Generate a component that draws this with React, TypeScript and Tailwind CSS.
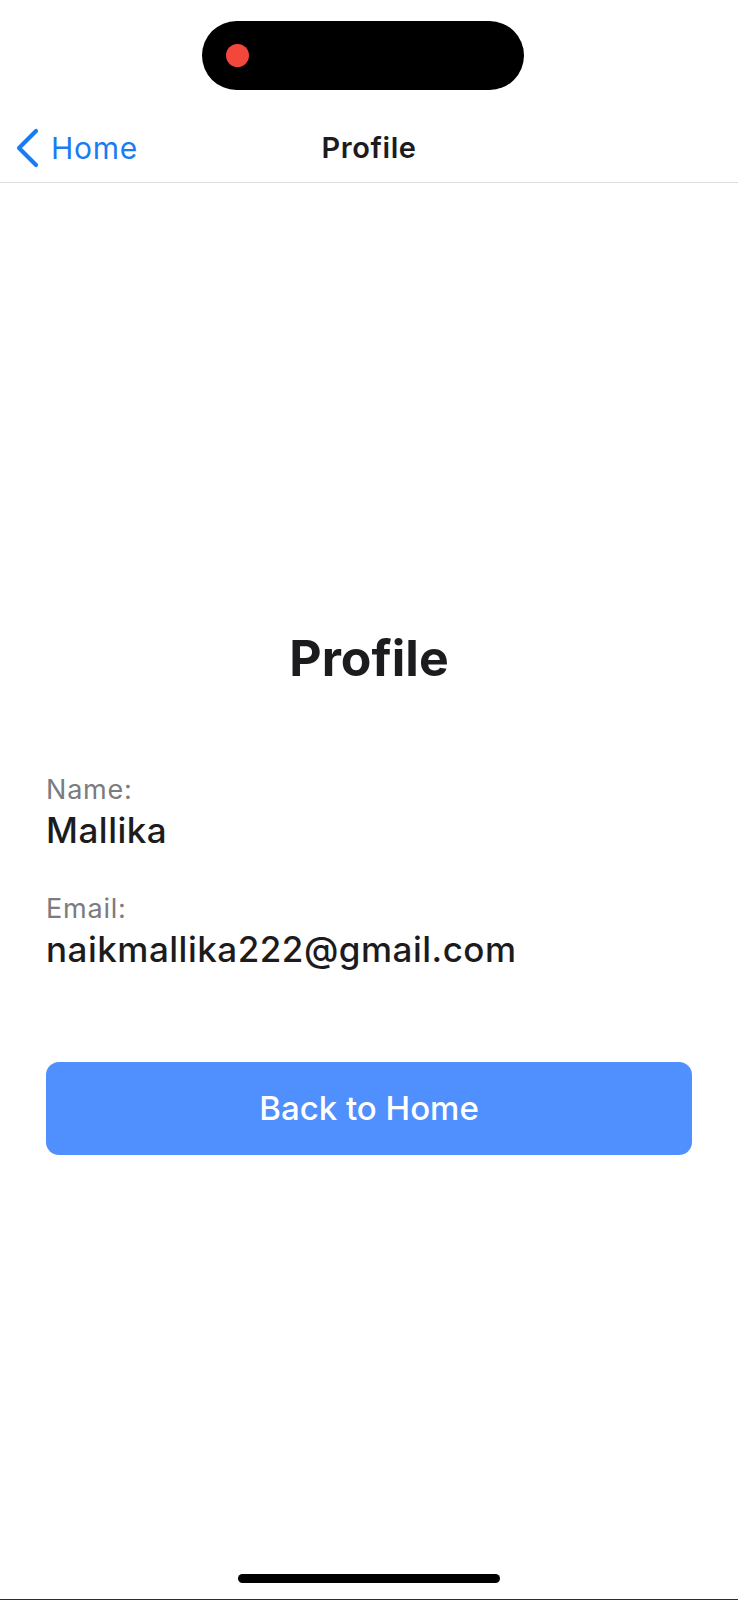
function StatusPill() {
  return (
    <div className="flex pl-[202px] pt-[21px] pb-[23px]">
      <div className="flex items-center w-[322px] h-[69px] rounded-full bg-black pl-[24px]">
        <div className="w-[23px] h-[23px] rounded-full bg-[#f4473b]" />
      </div>
    </div>
  )
}

function NavBar() {
  return (
    <div className="relative flex items-center h-[70px] border-b border-[#dcdcdc]">
      <button className="flex items-center gap-[11px] pl-[14px] text-[#1a7cf5]">
        <svg width="26" height="40" viewBox="0 0 26 40" fill="none">
          <path
            d="M22 3 L5 20 L22 37"
            stroke="currentColor"
            strokeWidth="4.2"
            strokeLinecap="round"
            strokeLinejoin="round"
          />
        </svg>
        <span className="text-[30px] leading-none tracking-[0.7px]">Home</span>
      </button>
      <h1 className="absolute left-1/2 -translate-x-1/2 text-[29px] leading-none font-semibold tracking-[0.6px] text-[#1c1c1e]">
        Profile
      </h1>
    </div>
  )
}

interface FieldProps {
  label: string
  value: string
  className?: string
}

function Field({ label, value, className }: FieldProps) {
  return (
    <div className={className}>
      <p className="text-[27px] leading-none tracking-[0.8px] text-[#7b7b80]">{label}</p>
      <p className="mt-[10px] text-[35px] leading-none font-medium tracking-[0.5px] text-[#1c1c1e]">
        {value}
      </p>
    </div>
  )
}

export default function App() {
  return (
    <div
      className="relative flex flex-col w-[738px] h-[1600px] bg-white overflow-hidden border-b border-[#2e2e2e]"
      style={{ fontFamily: 'Inter, "Noto Sans", sans-serif' }}
    >
      <StatusPill />
      <NavBar />

      <main className="flex-1 flex flex-col justify-center px-[46px] pt-[6px]">
        <h2 className="text-center text-[50px] leading-none font-bold text-[#1c1c1e]">
          Profile
        </h2>

        <Field label="Name:" value="Mallika" className="mt-[93px]" />
        <Field label="Email:" value="naikmallika222@gmail.com" className="mt-[47px]" />

        <button className="mt-[95px] w-full h-[93px] rounded-[13px] bg-[#508ffe] text-white text-[33px] font-medium">
          Back to Home
        </button>
      </main>

      <div className="absolute bottom-[16px] left-1/2 -translate-x-1/2 w-[262px] h-[9px] rounded-full bg-black" />
    </div>
  )
}
